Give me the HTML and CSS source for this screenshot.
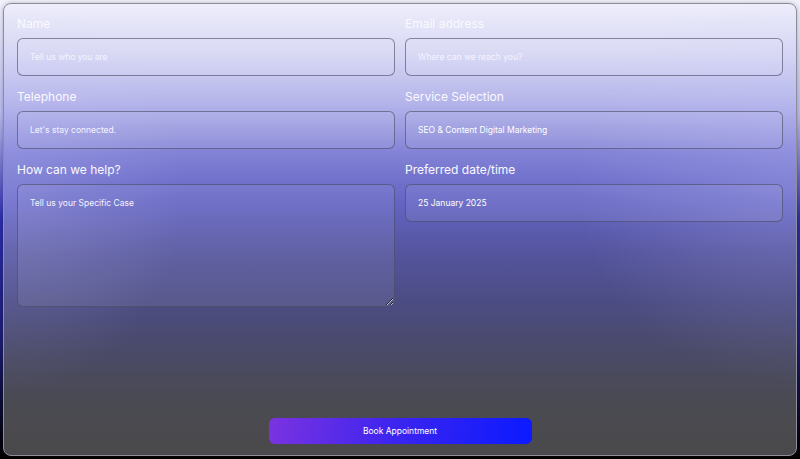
FILE: index.html
```html
<!DOCTYPE html>
<html lang="en">
<head>
  <meta charset="UTF-8">
  <title>Book an Appointment</title>
  <meta name="viewport" content="width=device-width, initial-scale=1">
  <link rel="stylesheet" href="styles.css">
</head>
<body>
  <form class="card">
    <div class="fields">
      <div class="field">
        <label for="name">Name</label>
        <input class="box" id="name" type="text" placeholder="Tell us who you are">
      </div>
      <div class="field">
        <label for="email">Email address</label>
        <input class="box" id="email" type="email" placeholder="Where can we reach you?">
      </div>
      <div class="field">
        <label for="tel">Telephone</label>
        <input class="box" id="tel" type="tel" placeholder="Let's stay connected.">
      </div>
      <div class="field">
        <label for="service">Service Selection</label>
        <select class="box" id="service">
          <option>SEO &amp; Content Digital Marketing</option>
          <option>Web Design</option>
          <option>Social Media</option>
        </select>
      </div>
      <div class="field">
        <label for="help">How can we help?</label>
        <textarea class="box area" id="help" placeholder="Tell us your Specific Case"></textarea>
      </div>
      <div class="field">
        <label for="date">Preferred date/time</label>
        <input class="box" id="date" type="text" value="25 January 2025">
      </div>
    </div>
    <button class="book" type="button">Book Appointment</button>
  </form>
</body>
</html>
```

FILE: styles.css
```css
* { box-sizing: border-box; }
html, body { height: 100%; }
body {
  margin: 0;
  font-family: Inter, 'Noto Sans', Arial, sans-serif;
  color: #fff;
  background: linear-gradient(to bottom, #f2f2fc 0%, #b8b8ee 25%, #2c2cac 48%, #1c1c70 75%, #000 100%);
  padding: 3px;
}
.card {
  height: 100%;
  display: flex;
  flex-direction: column;
  padding: 12px 13px 11px 13px;
  border: 1px solid #8e8e98;
  border-radius: 8px;
  background:
    radial-gradient(ellipse 180px 200px at 0% 42%, rgba(200,200,255,0.22), rgba(200,200,255,0) 100%),
    radial-gradient(ellipse 220px 200px at 100% 40%, rgba(200,200,255,0.22), rgba(200,200,255,0) 100%),
    linear-gradient(to bottom, #eeeefb 0%, #d6d6f4 11%, #b4b4ea 22%, #8282d6 33%, #6464c4 44%, #54549e 55%, #4c4c84 66%, #4a4a68 77%, #4a4a52 88%, #4a4a4c 100%);
  box-shadow: 0 0 4px rgba(0,0,0,0.25);
}
.fields {
  display: grid;
  grid-template-columns: 1fr 1fr;
  column-gap: 10px;
  row-gap: 13px;
  align-items: start;
}
.field {
  display: flex;
  flex-direction: column;
}
.field label {
  font-size: 12px;
  line-height: 16px;
  margin-bottom: 6px;
  color: #fafaff;
}
.box {
  font-family: inherit;
  font-size: 8.5px;
  color: #fff;
  height: 38px;
  padding: 0 12px;
  border: 1px solid rgba(70,70,95,0.6);
  border-radius: 6px;
  background: rgba(255,255,255,0.08);
  outline: none;
  -webkit-appearance: none;
  appearance: none;
}
.box::placeholder { color: #f4f4ff; opacity: 1; }
select.box option { color: #222; }
.area {
  height: 123px;
  padding: 13px 12px;
  resize: vertical;
}
.book {
  margin: auto auto 0 auto;
  width: 263px;
  height: 26px;
  border: 0;
  border-radius: 6px;
  font-family: inherit;
  font-size: 8.5px;
  color: #fff;
  background: linear-gradient(100deg, #7b33e0 0%, #3a24f0 50%, #0a1aff 100%);
  cursor: pointer;
}
```
